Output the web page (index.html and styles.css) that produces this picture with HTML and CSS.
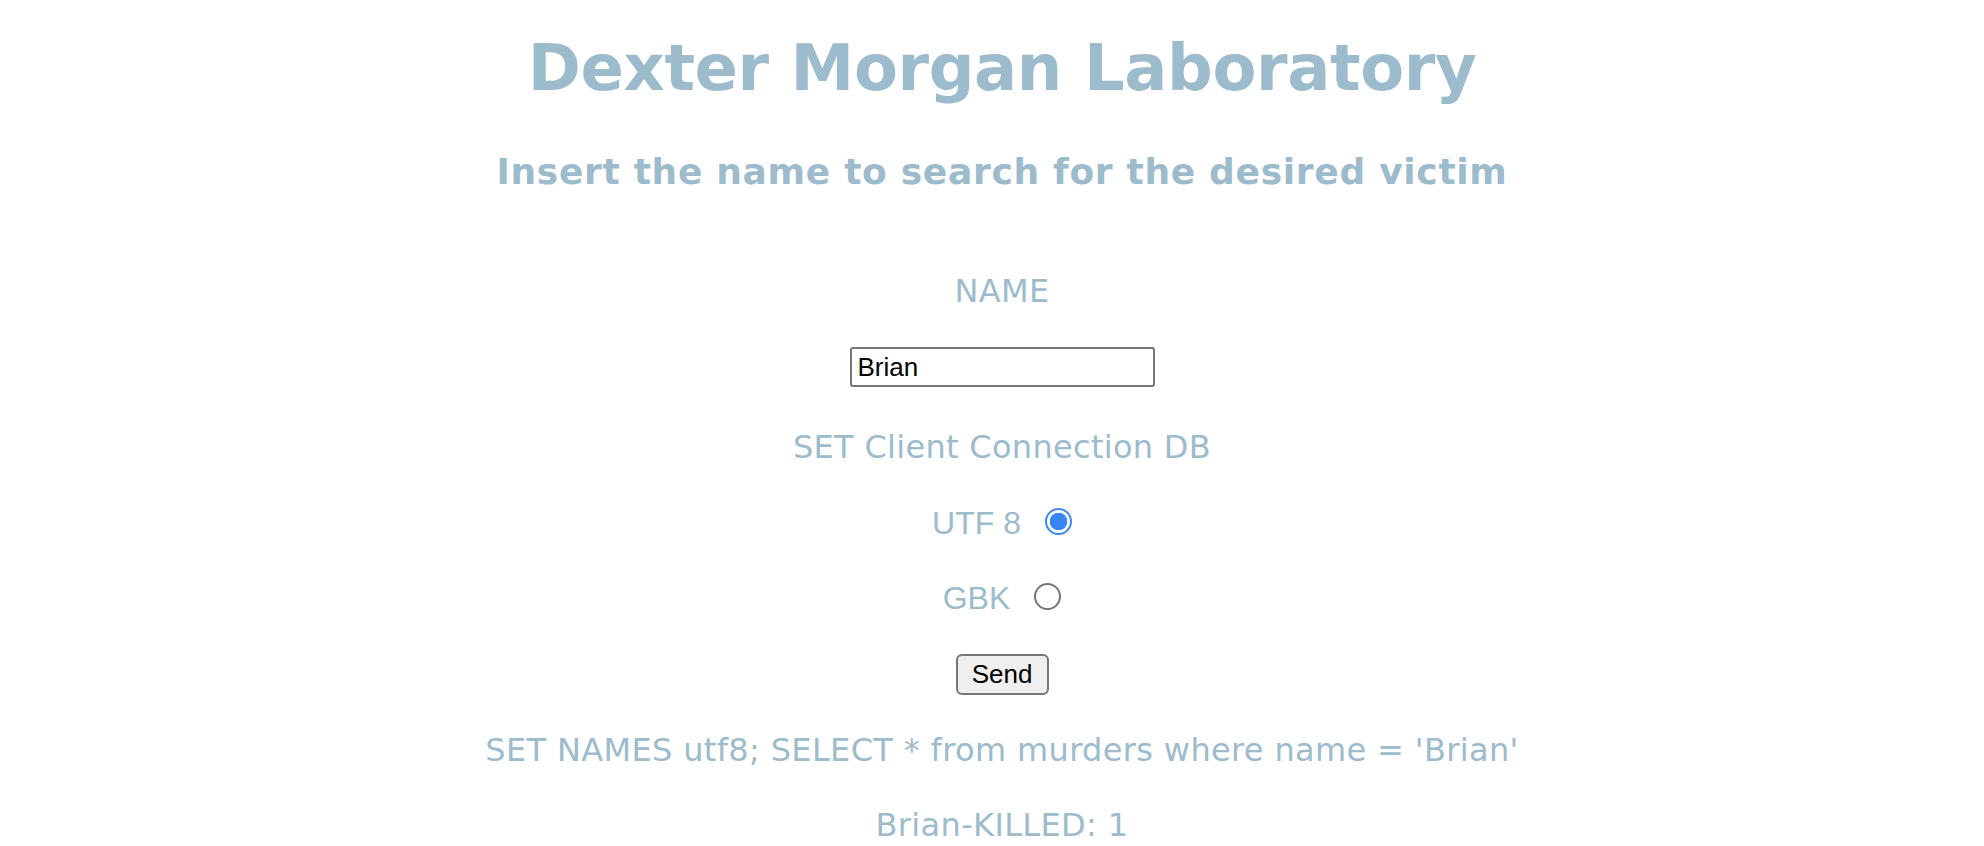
FILE: index.html
```html
<!DOCTYPE html>
<html lang="en">
<head>
<meta charset="utf-8">
<title>Dexter Morgan Laboratory</title>
<link rel="stylesheet" href="styles.css">
</head>
<body>
<main class="page">
  <h1 class="title">Dexter Morgan Laboratory</h1>
  <h2 class="subtitle">Insert the name to search for the desired victim</h2>
  <form class="form" onsubmit="return false">
    <p class="label label-name">NAME</p>
    <input class="name-input" type="text" value="Brian">
    <p class="label label-conn">SET Client Connection DB</p>
    <label class="option option-utf"><span>UTF 8</span><input class="radio" type="radio" name="charset" checked></label>
    <label class="option option-gbk"><span>GBK</span><input class="radio" type="radio" name="charset"></label>
    <button class="send" type="submit">Send</button>
  </form>
  <p class="result result-query">SET NAMES utf8; SELECT * from murders where name = 'Brian'</p>
  <p class="result result-count">Brian-KILLED: 1</p>
</main>
</body>
</html>
```
FILE: styles.css
```css
html, body {
  margin: 0;
  padding: 0;
  background: #ffffff;
}

body {
  font-family: Verdana, "DejaVu Sans", sans-serif;
  color: #9cbbcc;
}

.page {
  display: flex;
  flex-direction: column;
  align-items: center;
  text-align: center;
  padding-left: 20px;
}

.title {
  margin: 28px 0 0;
  font-size: 64px;
  line-height: 80px;
  font-weight: bold;
  letter-spacing: -0.4px;
}

.subtitle {
  margin: 42px 0 0;
  font-size: 36px;
  line-height: 44px;
  font-weight: bold;
  letter-spacing: 0.7px;
}

.form {
  display: flex;
  flex-direction: column;
  align-items: center;
  margin: 0;
}

.label {
  margin: 0;
  font-size: 32px;
  line-height: 36px;
  letter-spacing: 0.3px;
}

.label-name {
  margin-top: 79px;
}

.name-input {
  margin-top: 38px;
  box-sizing: border-box;
  width: 305px;
  height: 40px;
  padding: 0 6px;
  border: 2px solid #767676;
  border-radius: 3px;
  font-family: "Liberation Sans", Arial, sans-serif;
  font-size: 26px;
  color: #000000;
  background: #ffffff;
  outline: none;
}

.label-conn {
  margin-top: 42px;
}

.option {
  display: flex;
  align-items: center;
  gap: 24px;
  font-family: "Liberation Sans", Arial, sans-serif;
  font-size: 32px;
  line-height: 36px;
}

.option-utf {
  margin-top: 40px;
}

.option-gbk {
  margin-top: 39px;
}

.radio {
  appearance: none;
  -webkit-appearance: none;
  margin: 0;
  box-sizing: border-box;
  width: 27px;
  height: 27px;
  border-radius: 50%;
  border: 2px solid #767676;
  background: #ffffff;
  position: relative;
  top: -2px;
}

.radio:checked {
  border-color: #3a86f8;
  background: radial-gradient(circle, #3a86f8 0 8.5px, #ffffff 9px);
}

.send {
  margin-top: 38px;
  box-sizing: border-box;
  width: 93px;
  height: 41px;
  padding: 0;
  border: 2px solid #767676;
  border-radius: 6px;
  background: #efefef;
  font-family: "Liberation Sans", Arial, sans-serif;
  font-size: 26px;
  color: #000000;
}

.result {
  margin: 0;
  font-size: 32px;
  line-height: 36px;
  letter-spacing: 0.35px;
}

.result-query {
  margin-top: 37px;
}

.result-count {
  margin-top: 39px;
}
```
